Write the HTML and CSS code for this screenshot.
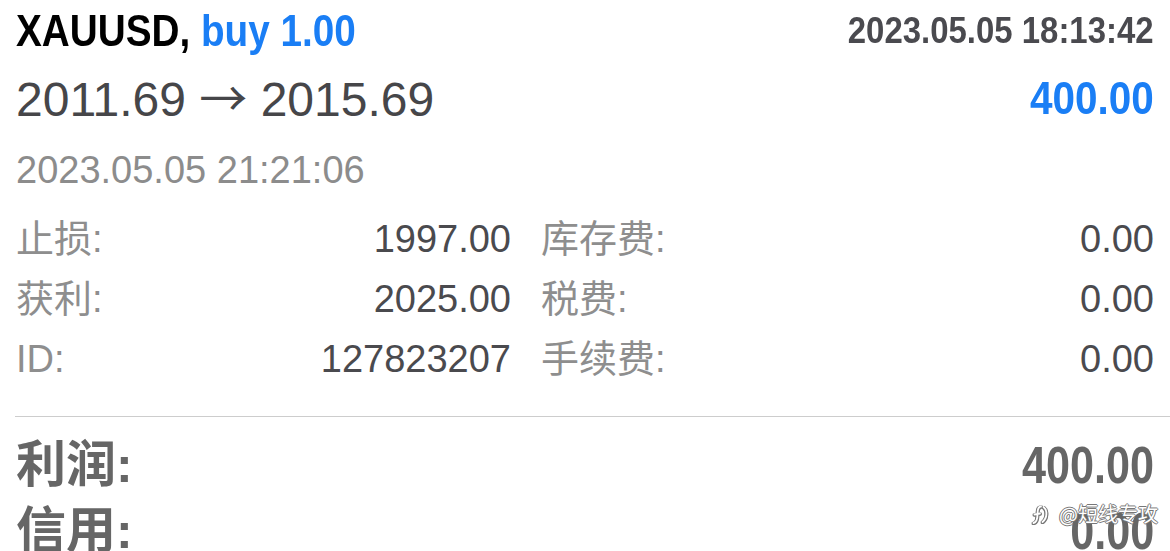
FILE: index.html
```html
<!DOCTYPE html>
<html lang="zh-CN">
<head>
  <meta charset="UTF-8">
  <title>XAUUSD buy 1.00</title>
  <link rel="stylesheet" href="styles.css">
</head>
<body>
  <div class="sheet">
    <!-- Cabecera: símbolo y hora de apertura -->
    <div class="head">
      <div class="symbol">XAUUSD, <span class="type">buy 1.00</span></div>
      <div class="open-time">2023.05.05 18:13:42</div>
    </div>

    <div class="prices">
      <div class="price-range">2011.69 <span class="arrow">→</span> 2015.69</div>
      <div class="result">400.00</div>
    </div>

    <div class="close-time">2023.05.05 21:21:06</div>

    <!-- Detalles de la orden -->
    <div class="details">
      <div class="detail"><span class="label">止损:</span><span class="value">1997.00</span></div>
      <div class="detail"><span class="label">库存费:</span><span class="value">0.00</span></div>
      <div class="detail"><span class="label">获利:</span><span class="value">2025.00</span></div>
      <div class="detail"><span class="label">税费:</span><span class="value">0.00</span></div>
      <div class="detail"><span class="label">ID:</span><span class="value">127823207</span></div>
      <div class="detail"><span class="label">手续费:</span><span class="value">0.00</span></div>
    </div>

    <div class="divider"></div>

    <div class="totals">
      <div class="total"><span class="total-label">利润:</span><span class="total-value">400.00</span></div>
      <div class="total"><span class="total-label">信用:</span><span class="total-value">0.00</span></div>
    </div>
  </div>

  <div class="watermark">
    <svg class="mark-icon" width="20" height="22" viewBox="0 0 20 22">
      <path d="M2.5 20 C5 19.5 6.5 16 6.5 11 C6.5 6 7.5 3.5 10 3.5 M3.5 11.5 L9 10.5 M12.5 4 C16.5 7 16.5 15 11.5 19" fill="none" stroke="#fff" stroke-width="1.8" stroke-linecap="round"/>
    </svg>
    <span>@短线专攻</span>
  </div>
</body>
</html>
```

FILE: styles.css
```css
html, body {
  margin: 0;
  padding: 0;
  background: #fff;
  height: 100%;
  overflow: hidden;
}

body {
  font-family: "Liberation Sans", "Noto Sans CJK SC", sans-serif;
  position: relative;
}

.sheet {
  padding: 0 16px;
}

.head, .prices {
  display: flex;
  justify-content: space-between;
}

.head {
  height: 62px;
  align-items: center;
}

/* el tipo de la app es condensado en negrita */
.symbol, .open-time, .result, .total-value {
  font-family: "Liberation Sans", sans-serif;
  font-weight: bold;
  white-space: nowrap;
}

.symbol {
  font-size: 45px;
  line-height: 62px;
  color: #000;
  transform: scaleX(0.86);
  transform-origin: left center;
}

.type {
  color: #1a7ef5;
}

.open-time {
  font-size: 37px;
  line-height: 62px;
  color: #4a4a4f;
  transform: scaleX(0.89);
  transform-origin: right center;
}

.prices {
  height: 67px;
  align-items: baseline;
}

.price-range {
  font-size: 48px;
  line-height: 67px;
  color: #464649;
}

.arrow {
  font-family: "Noto Sans CJK SC", sans-serif;
  font-size: 48px;
}

.result {
  font-size: 46px;
  line-height: 67px;
  color: #1a7ef5;
  position: relative;
  top: -2px;
  transform: scaleX(0.88);
  transform-origin: right center;
}

.close-time {
  margin-top: 18px;
  font-size: 38px;
  line-height: 46px;
  color: #8c8c8c;
}

.details {
  margin-top: 16px;
  display: grid;
  grid-template-columns: 495px 1fr;
  column-gap: 30px;
}

.detail {
  display: flex;
  justify-content: space-between;
  height: 60px;
  line-height: 60px;
  font-size: 38px;
}

.label {
  color: #8e8e8e;
}

.value {
  color: #4a4a4e;
}

.divider {
  margin: 27px -16px 0 -1px;
  height: 1px;
  background: #cdcdcd;
}

.totals {
  margin-top: 15px;
}

.total {
  display: flex;
  justify-content: space-between;
  align-items: center;
  height: 66px;
  color: #666;
  font-weight: bold;
}

.total-label {
  font-size: 50px;
  line-height: 1;
}

.total-value {
  font-size: 52px;
  line-height: 1;
  transform: scaleX(0.83);
  transform-origin: right center;
}

.watermark {
  position: absolute;
  right: 12px;
  bottom: 23px;
  display: flex;
  align-items: center;
  gap: 8px;
  font-family: "Noto Sans CJK SC", sans-serif;
  font-size: 20px;
  color: #fff;
  text-shadow: 1px 0 0 #777, -1px 0 0 #777, 0 1px 0 #777, 0 -1px 0 #777;
}

.mark-icon {
  filter: drop-shadow(1px 0 0 #777) drop-shadow(-1px 0 0 #777) drop-shadow(0 1px 0 #777);
}
```
